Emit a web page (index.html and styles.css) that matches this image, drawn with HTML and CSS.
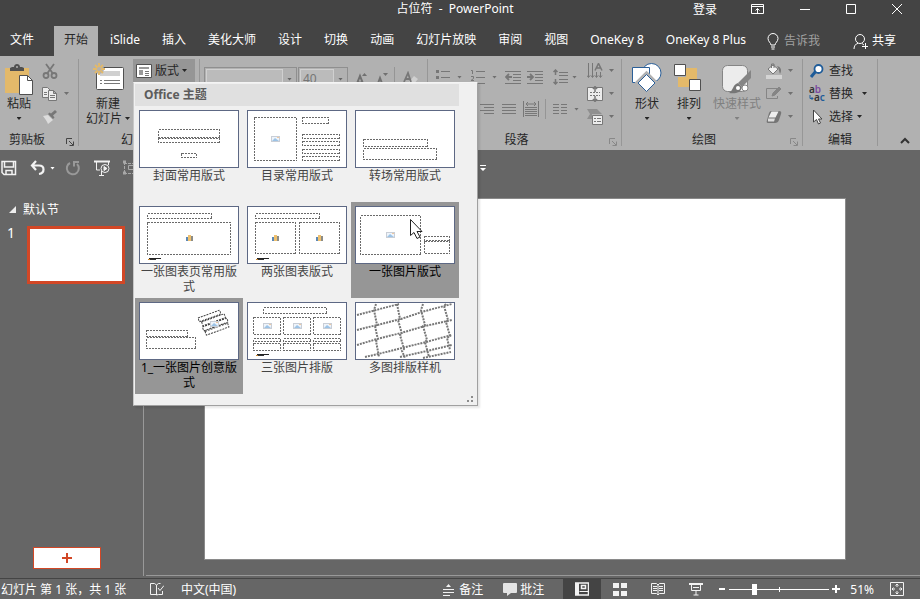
FILE: index.html
```
<!DOCTYPE html>
<html lang="zh-CN">
<head>
    <meta charset="UTF-8">
    <meta name="viewport" content="width=device-width, initial-scale=1.0">
    <title>占位符 - PowerPoint</title>
    <link rel="stylesheet" href="styles.css">
</head>
<body>
    <!-- shared symbols for the layout thumbnails -->
    <svg class="defs" aria-hidden="true">
        <symbol id="pic" viewBox="0 0 9 6"><rect width="9" height="6" fill="#c9ced6"/><rect x="1" y="1" width="7" height="4" fill="#eef4fb"/><path d="M1 5l3-3 4 3z" fill="#9cc3e6"/><rect x="6" y="1" width="2" height="1" fill="#f0c9a0"/></symbol>
        <symbol id="chart" viewBox="0 0 7 6"><rect y="2" width="2" height="4" fill="#5b87b5"/><rect x="2" width="3" height="6" fill="#efc06d"/><rect x="5" y="1" width="2" height="5" fill="#8c8c86"/></symbol>
        <symbol id="mark" viewBox="0 0 13 2"><path d="M1 0h12v1h-12z" fill="#222"/><path d="M0 1h8v1h-8z" fill="#333"/><path d="M0 1h2v1h-2z" fill="#d08a2e"/></symbol>
    </svg>

    <header>
        <div class="titlebar">
            <h1>占位符&nbsp; -&nbsp; PowerPoint</h1>
            <div class="window-controls">
                <button class="login">登录</button>
                <button aria-label="功能区显示选项"><svg width="14" height="12" viewBox="0 0 14 12" fill="none" stroke="#fff"><path d="M.5 1.500h12v9h-12zM.5 3.500h12M6.500 10V5.500M4.500 7.500l2-2 2 2"/></svg></button>
                <button aria-label="最小化"><svg width="12" height="12" viewBox="0 0 12 12" stroke="#fff"><path d="M1 6.500h10"/></svg></button>
                <button aria-label="最大化"><svg width="12" height="12" viewBox="0 0 12 12" fill="none" stroke="#fff"><path d="M1.500 1.500h9v9h-9z"/></svg></button>
                <button aria-label="关闭"><svg width="12" height="12" viewBox="0 0 12 12" stroke="#fff"><path d="M1 1l10 10M11 1L1 11"/></svg></button>
            </div>
        </div>
        <nav class="tabs">
            <a class="file" href="#">文件</a>
            <a class="active" href="#">开始</a>
            <a href="#">iSlide</a>
            <a href="#">插入</a>
            <a href="#">美化大师</a>
            <a href="#">设计</a>
            <a href="#">切换</a>
            <a href="#">动画</a>
            <a href="#">幻灯片放映</a>
            <a href="#">审阅</a>
            <a href="#">视图</a>
            <a href="#">OneKey 8</a>
            <a href="#">OneKey 8 Plus</a>
            <a class="tell" href="#"><svg width="12" height="17" viewBox="0 0 12 17" fill="none" stroke="#fff"><path d="M4 12c0-2-3-3.500-3-6.500a5 5 0 0 1 10 0c0 3-3 4.500-3 6.500zM4 14h4M4.500 16h3"/></svg>告诉我</a>
            <a class="share" href="#"><svg width="16" height="17" viewBox="0 0 16 17" fill="none" stroke="#fff"><circle cx="7" cy="6" r="4.500"/><path d="M1 16c0-3 1.500-5 4-5.800M9 10.500l2 1.500M12.500 10v6M9 13.500h6"/></svg>共享</a>
        </nav>
    </header>

    <section class="ribbon">
        <div class="group clipboard">
            <div class="tools">
                <button class="big">
                    <svg width="32" height="32" viewBox="0 0 32 32"><path d="M2 5h24v25H2z" fill="#e3b96a"/><path d="M7 8V5l2-1h2c0-4 6-4 6 0h2l2 1v3z" fill="#505050"/><circle cx="14" cy="4" r="1" fill="#b1b1b1"/><path d="M16.500 12.500h8l5 5v14h-13z" fill="#fff" stroke="#505050"/><path d="M24.500 12.500v5h5" fill="none" stroke="#505050"/></svg>
                    <span>粘贴</span><i class="caret"></i>
                </button>
                <div class="stack">
                    <button class="small" aria-label="剪切"><svg width="16" height="16" viewBox="0 0 16 16" fill="none" stroke="#777" stroke-width="1.800"><path d="M4 1l6.500 9M12 1L5.500 10"/><circle cx="4" cy="12.500" r="2.500"/><circle cx="12" cy="12.500" r="2.500"/></svg></button>
                    <button class="small" aria-label="复制"><svg width="16" height="16" viewBox="0 0 16 16" fill="#ececec" stroke="#777"><path d="M.5 1.500h5l3 3v7h-8z"/><path d="M6.500 4.500h5l3 3v7h-8zM8 9.500h5M8 11.500h5M2 6.500h3M2 8.500h3M11.500 4.500v3h3"/></svg><i class="caret"></i></button>
                    <button class="small" aria-label="格式刷"><svg width="16" height="16" viewBox="0 0 16 16"><path d="M1 7l5-1 5 5-5 4c-1-3-3-5-5-8z" fill="#dcdcdc"/><path d="M6 5l5 5 1.500-1.500-1.500-2L15 3l-2-2-4 3.500L7.500 3.500z" fill="#777"/></svg></button>
                </div>
            </div>
            <div class="caption"><span>剪贴板</span><button class="launcher" aria-label="剪贴板选项"><svg width="8" height="8" viewBox="0 0 8 8" fill="none" stroke="#444"><path d="M.5 6V.5H6M3 3l4 4M7.500 3.500v4h-4"/></svg></button></div>
        </div>

        <div class="group slides">
            <div class="tools">
                <button class="big">
                    <svg width="32" height="32" viewBox="0 0 32 32"><rect x="4.500" y="4.500" width="27" height="22" rx="1" fill="#fff" stroke="#505050"/><path d="M8 8h20v5H8z" fill="#d0d0d0"/><path d="M8 17.500h2M12 17.500h16M8 20.500h2M12 20.500h16" stroke="#777"/><circle cx="7" cy="6" r="5" fill="#b1b1b1"/><path d="M7 0v12M1 6h12M3 2l8 8M11 2l-8 8" stroke="#e3b96a" stroke-width="1.800"/><circle cx="7" cy="6" r="2.500" fill="#b1b1b1" stroke="#e3b96a"/></svg>
                    <span>新建</span><span class="with-caret">幻灯片<i class="caret"></i></span>
                </button>
                <div class="layout-menu">
                    <button class="layout-btn"><svg width="16" height="14" viewBox="0 0 16 14"><path d="M.5.5h15v13H.5z" fill="#fff" stroke="#505050"/><path d="M3 3h10v2H3zM3 6h4v5H3z" fill="#999"/><path d="M9 7.500h4M9 9.500h4M9 11.500h4" stroke="#777"/></svg>版式<i class="caret"></i></button>
                    <div class="gallery">
                        <h2>Office 主题</h2>
                        <div class="gallery-grid">
                            <button class="layout">
                                <svg class="thumb" viewBox="0 0 98 56"><path d="M18.500 18.500h61v8h-61zM18.500 27.500h61v4h-61zM41.500 42.500h15v4h-15z"/></svg>
                                <span>封面常用版式</span>
                            </button>
                            <button class="layout">
                                <svg class="thumb" viewBox="0 0 98 56"><path d="M6.500 6.500h42v43h-42zM54.500 6.500h26v6h-26zM54.500 23.500h37v4h-37zM54.500 30.500h37v4h-37zM54.500 38.500h37v4h-37zM54.500 45.500h37v4h-37z"/><use href="#pic" x="23" y="25" width="9" height="6"/></svg>
                                <span>目录常用版式</span>
                            </button>
                            <button class="layout">
                                <svg class="thumb" viewBox="0 0 98 56"><path d="M7.500 28.500h64v7h-64zM7.500 37.500h73v11h-73z"/></svg>
                                <span>转场常用版式</span>
                            </button>
                            <button class="layout">
                                <svg class="thumb" viewBox="0 0 98 56"><path d="M7.500 6.500h64v5h-64zM7.500 15.500h83v32h-83z"/><use href="#chart" x="46" y="28" width="7" height="6"/><use href="#mark" x="8" y="51" width="13" height="2"/></svg>
                                <span>一张图表页常用版式</span>
                            </button>
                            <button class="layout">
                                <svg class="thumb" viewBox="0 0 98 56"><path d="M7.500 6.500h64v5h-64zM7.500 15.500h40v31h-40zM51.500 15.500h40v31h-40z"/><use href="#chart" x="24" y="28" width="7" height="6"/><use href="#chart" x="68" y="28" width="7" height="6"/><use href="#mark" x="8" y="51" width="13" height="2"/></svg>
                                <span>两张图表版式</span>
                            </button>
                            <button class="layout selected">
                                <svg class="thumb" viewBox="0 0 98 56"><path d="M4.500 8.500h60v39h-60zM68.500 29.500h25v4h-25zM68.500 34.500h25v12h-25z"/><use href="#pic" x="30" y="25" width="9" height="6"/><path class="pointer" d="M54.500 12.500v16l3.500-3 3 6 3-1.500-3-5.500h5z"/></svg>
                                <span>一张图片版式</span>
                            </button>
                            <button class="layout selected">
                                <svg class="thumb" viewBox="0 0 98 56"><path d="M6.500 27.500h41v6h-41zM6.500 34.500h49v11h-49z"/><g class="tilted" transform="rotate(-20 58 15)"><path d="M58 15h23v4h-23zM60 20h24v4h-24zM59 25h26v4h-26zM60 30h24v4h-24z"/></g><use href="#pic" x="70" y="18" width="9" height="6"/></svg>
                                <span>1_一张图片创意版式</span>
                            </button>
                            <button class="layout">
                                <svg class="thumb" viewBox="0 0 98 56"><path d="M15.500 4.500h63v6h-63zM5.500 14.500h27v17h-27zM35.500 14.500h27v17h-27zM65.500 14.500h27v17h-27zM5.500 35.500h27v3h-27zM35.500 35.500h27v3h-27zM65.500 35.500h27v3h-27zM5.500 40.500h27v7h-27zM35.500 40.500h27v7h-27zM65.500 40.500h27v7h-27z"/><use href="#pic" x="15" y="20" width="9" height="6"/><use href="#pic" x="45" y="20" width="9" height="6"/><use href="#pic" x="75" y="20" width="9" height="6"/><use href="#mark" x="8" y="51" width="13" height="2"/></svg>
                                <span>三张图片排版</span>
                            </button>
                            <button class="layout">
                                <svg class="thumb" viewBox="0 0 98 56"><g class="tilted mesh"><path d="M1 12l19-5 23-6M1 27l20-5 24-6 24-8 27-7M1 42l20-6 24-6 24-7 27-6M9 54l13-3 24-6 24-6 26-7M44 54l27-6 25-6M67 55l28-6M20 1l-2 6 3 15-2 1 3 14-2 1 3 16M41 1l3 15-2 1 4 14-2 1 4 14-2 2 3 7M67 1l-2 6 4 15-2 1 4 14-2 2 4 15M90 1l-2 2 4 14-2 2 4 14-3 2 3 12"/></g></svg>
                                <span>多图排版样机</span>
                            </button>
                        </div>
                        <svg class="grip" width="6" height="6" viewBox="0 0 6 6" fill="#8c8c8c"><path d="M4 0h2v2H4zM0 4h2v2H0zM4 4h2v2H4z"/></svg>
                    </div>
                </div>
            </div>
            <div class="caption"><span>幻灯片</span></div>
        </div>

        <div class="group font">
            <div class="tools">
                <label class="combo name"><select aria-label="字体"><option></option></select><i class="caret"></i></label>
                <label class="combo size"><select aria-label="字号"><option>40</option></select><i class="caret"></i></label>
                <button class="small grow" aria-label="增大字号"><svg width="16" height="16" viewBox="0 0 16 16"><path d="M2 15L6 5l4 10M3.500 11.500h5" fill="none" stroke="#707070" stroke-width="2"/><path d="M8 5l2.500-3L13 5z" fill="#707070"/></svg></button>
                <button class="small" aria-label="减小字号"><svg width="16" height="16" viewBox="0 0 16 16"><path d="M2 15l3-8 3 8M3.500 12h4" fill="none" stroke="#707070" stroke-width="2"/><path d="M8 2h5l-2.500 3z" fill="#707070"/></svg></button>
                <span class="divider"></span>
                <button class="small clear" aria-label="清除格式"><svg width="16" height="16" viewBox="0 0 16 16"><path d="M6 11l5-6 4 3-5 6z" fill="#d0d0d0"/><path d="M1 11L5 2l3 9M2.500 8h4" fill="none" stroke="#777" stroke-width="1.800"/></svg></button>
            </div>
            <div class="caption"><span>字体</span></div>
        </div>

        <div class="group paragraph">
            <div class="tools">
                <div class="para-rows">
                    <div class="row">
                        <button class="small" aria-label="项目符号"><svg width="16" height="16" viewBox="0 0 16 16" stroke="#777"><path d="M1 2.500h3M1 8.500h3M1 14.500h3" stroke-width="3"/><path d="M6 2.500h9M6 8.500h9M6 14.500h9"/></svg><i class="caret"></i></button>
                        <button class="small" aria-label="编号"><svg width="16" height="16" viewBox="0 0 16 16" fill="none" stroke="#777"><path d="M1 1.500h1.500V5M1 7.500h2.500v2L1 11.500h3M6 2.500h9M6 8.500h9M6 14.500h9"/></svg><i class="caret"></i></button>
                        <button class="small" aria-label="减少缩进"><svg width="16" height="16" viewBox="0 0 16 16" fill="none" stroke="#777"><path d="M0 2.500h16M8 5.500h8M8 8.500h8M8 11.500h8M0 14.500h16"/><path d="M7 8H1M4 5L1 8l3 3" stroke-width="1.800"/></svg></button>
                        <button class="small" aria-label="增加缩进"><svg width="16" height="16" viewBox="0 0 16 16" fill="none" stroke="#777"><path d="M0 2.500h16M8 5.500h8M8 8.500h8M8 11.500h8M0 14.500h16"/><path d="M0 8h6M3 5l3 3-3 3" stroke-width="1.800"/></svg></button>
                        <button class="small spacing" aria-label="行距"><svg width="16" height="16" viewBox="0 0 16 16" fill="none" stroke="#777"><path d="M6 3.500h9M6 6.500h9M6 10.500h9M6 13.500h9"/><path d="M2.500 1v5M.5 3l2-2 2 2M2.500 10v5M.5 13l2 2 2-2" stroke-width="1.500"/></svg><i class="caret"></i></button>
                    </div>
                    <div class="row">
                        <button class="small" aria-label="左对齐"><svg width="16" height="16" viewBox="0 0 16 16" stroke="#777"><path d="M1 3.500h14M1 6.500h9M1 9.500h14M1 12.500h9"/></svg></button>
                        <button class="small" aria-label="居中"><svg width="16" height="16" viewBox="0 0 16 16" stroke="#777"><path d="M1 3.500h14M4 6.500h8M1 9.500h14M4 12.500h8"/></svg></button>
                        <button class="small" aria-label="右对齐"><svg width="16" height="16" viewBox="0 0 16 16" stroke="#777"><path d="M1 3.500h14M5 6.500h10M1 9.500h14M5 12.500h10"/></svg></button>
                        <button class="small" aria-label="两端对齐"><svg width="16" height="16" viewBox="0 0 16 16" stroke="#777"><path d="M1 3.500h14M1 6.500h14M1 9.500h14M1 12.500h14"/></svg></button>
                        <button class="small" aria-label="分散对齐"><svg width="16" height="16" viewBox="0 0 16 16" fill="none" stroke="#777"><path d="M.5 0v16M15.500 0v16M2 6.500h12M2 8.500h12M2 10.500h12M2 12.500h12M2 14.500h12"/><path d="M3 3h10M5 1L3 3l2 2M11 1l2 2-2 2"/></svg></button>
                        <span class="divider"></span>
                        <button class="small columns" aria-label="分栏"><svg width="16" height="16" viewBox="0 0 16 16" stroke="#777"><path d="M1 3.500h6M9 3.500h6M1 6.500h6M9 6.500h6M1 9.500h6M9 9.500h6M1 12.500h6M9 12.500h6"/></svg><i class="caret"></i></button>
                    </div>
                </div>
                <div class="stack">
                    <button class="small" aria-label="文字方向"><svg width="16" height="16" viewBox="0 0 16 16" fill="none" stroke="#777"><path d="M1.500 0v14M5.500 0v14M9.500 9v5M13.500 9v5M0 12.500l1.500 2 1.500-2M4 12.500l1.500 2 1.500-2M8 12.500l1.500 2 1.500-2M12 12.500l1.500 2 1.500-2"/><path d="M8 7.500l3.500-7 3.500 7M9.500 5h4" stroke-width="1.500"/></svg><i class="caret"></i></button>
                    <button class="small" aria-label="对齐文本"><svg width="16" height="16" viewBox="0 0 16 16" fill="#ececec" stroke="#777"><path d="M.5 1.500h15v13H.5z"/><path d="M3 6.500h10M3 9.500h10" stroke-dasharray="2 1"/><path d="M8 0v6M6 3l2-2.500L10 3M8 10v6M6 13l2 2.500 2-2.500" fill="none" stroke-width="1.500"/></svg><i class="caret"></i></button>
                    <button class="small" aria-label="转换为 SmartArt"><svg width="16" height="16" viewBox="0 0 16 16"><path d="M0 0h10l5 5H5v5H0l3-5z" fill="#8f8f8f"/><path d="M5.500 6.500h10v9h-10z" fill="#ececec" stroke="#777"/><path d="M7 9.500h2M10 9.500h4M7 12.500h2M10 12.500h4" stroke="#777"/></svg><i class="caret"></i></button>
                </div>
            </div>
            <div class="caption"><span>段落</span><button class="launcher" aria-label="段落选项"><svg width="8" height="8" viewBox="0 0 8 8" fill="none" stroke="#888"><path d="M.5 6V.5H6M3 3l4 4M7.500 3.500v4h-4"/></svg></button></div>
        </div>

        <div class="group drawing">
            <div class="tools">
                <button class="big shapes">
                    <svg width="32" height="32" viewBox="0 0 32 32" fill="#fff" stroke="#2b5f98"><circle cx="20.500" cy="10" r="9.500"/><path d="M1.500 4.500h17v15h-17z"/><path d="M15.500 10.500l9 9-9 9-9-9z" stroke="#b1b1b1" stroke-width="4"/><path d="M15.500 11.500l8.500 8.500-8.500 8.500L7 20z"/></svg>
                    <span>形状</span><i class="caret"></i>
                </button>
                <button class="big arrange">
                    <svg width="32" height="32" viewBox="0 0 32 32"><path d="M13 5h11v19H5V14h8z" fill="#e3b96a"/><path d="M1.500 1.500h11v11h-11zM16.500 16.500h11v11h-11z" fill="#fff" stroke="#505050"/></svg>
                    <span>排列</span><i class="caret"></i>
                </button>
                <button class="big styles muted">
                    <svg width="32" height="32" viewBox="0 0 32 32"><rect x="1.500" y="2.500" width="25" height="26" rx="5" fill="#ececec" stroke="#858585"/><path d="M30 7v8l-9 9-4-4z" fill="#858585"/><path d="M17 20l4 4c-1 6-7 7-13 6 4-2 4-9 9-10z" fill="#777"/><circle cx="24" cy="25" r="3" fill="#fff" stroke="#858585"/><circle cx="17" cy="25" r="2" fill="#fff"/></svg>
                    <span>快速样式</span><i class="caret"></i>
                </button>
                <div class="stack">
                    <button class="small" aria-label="形状填充"><svg width="16" height="16" viewBox="0 0 16 16"><path d="M2 6l5-4 5 4-5 5z" fill="#f2f2f2" stroke="#777"/><path d="M5.500 5V1h2.500v4" fill="none" stroke="#777"/><path d="M11 3c4 1 5 4 3 8-1-3-1-5-3-8z" fill="#777"/><path d="M0 12h16v4H0z" fill="#d4d4d4"/></svg><i class="caret"></i></button>
                    <button class="small" aria-label="形状轮廓"><svg width="16" height="16" viewBox="0 0 16 16" fill="none" stroke="#858585"><path d="M11 2.500H.5v10h11V10"/><path d="M6 10l1-3 6-6 2 2-6 6z" fill="#858585"/></svg><i class="caret"></i></button>
                    <button class="small" aria-label="形状效果"><svg width="16" height="16" viewBox="0 0 16 16"><path d="M5 2h8q3 0 2 3l-2 6q-1 3-4 3H2q-2 0-1-3l2-7q1-2 2-2z" fill="#757575"/><path d="M5.500 2.500h7l-3 6h-7z" fill="#eee"/><path d="M2 9.500h7l-1 3H2z" fill="#ddd"/></svg><i class="caret"></i></button>
                </div>
            </div>
            <div class="caption"><span>绘图</span><button class="launcher" aria-label="绘图选项"><svg width="8" height="8" viewBox="0 0 8 8" fill="none" stroke="#888"><path d="M.5 6V.5H6M3 3l4 4M7.500 3.500v4h-4"/></svg></button></div>
        </div>

        <div class="group editing">
            <div class="tools">
                <div class="stack">
                    <button class="small"><svg width="16" height="16" viewBox="0 0 16 16"><path d="M2 14l5-6" stroke="#1f5c99" stroke-width="3"/><circle cx="9.500" cy="6" r="4" fill="#fff" stroke="#1f5c99" stroke-width="1.800"/></svg>查找</button>
                    <button class="small replace"><svg class="abc" width="16" height="16" viewBox="0 0 16 16"><text x="0" y="7">a<tspan fill="#7b4ba0">b</tspan></text><text x="5" y="15">a<tspan fill="#1f5c99">c</tspan></text><path d="M1 9v3.500h3M2.500 11L4 12.500 2.500 14" fill="none" stroke="#1f5c99"/></svg>替换<i class="caret"></i></button>
                    <button class="small"><svg width="16" height="16" viewBox="0 0 16 16"><path d="M4.500 1v12l3-2.500 2 4.500 2-1-2-4h3.500z" fill="#fff" stroke="#444"/></svg>选择<i class="caret"></i></button>
                </div>
            </div>
            <div class="caption"><span>编辑</span></div>
        </div>
        <button class="collapse" aria-label="折叠功能区"><svg width="10" height="8" viewBox="0 0 10 8" fill="none" stroke="#333" stroke-width="2"><path d="M1 6l4-4 4 4"/></svg></button>
    </section>

    <div class="quick-access">
        <button aria-label="保存"><svg width="16" height="16" viewBox="0 0 16 16" fill="none" stroke="#f2f2f2"><path d="M1 1.500h13.500v13H3l-2-2zM3.500 2v5h9V2M5 14.500v-4h6v4" stroke-width="1.500"/></svg></button>
        <button class="undo" aria-label="撤消"><svg width="16" height="16" viewBox="0 0 16 16" fill="none" stroke="#f2f2f2" stroke-width="2.200"><path d="M6 1L2 5.500 6 10M2 5.500h7c6 0 6 7.500 0 8.500"/></svg><i class="caret"></i></button>
        <button aria-label="恢复"><svg width="16" height="16" viewBox="0 0 16 16" fill="none" stroke="#999" stroke-width="2"><path d="M5 3a6 6 0 1 0 7 1M9 6.500V2h5"/></svg></button>
        <button class="play" aria-label="从头开始放映"><svg width="16" height="16" viewBox="0 0 16 16" fill="none" stroke="#f2f2f2"><path d="M0 1.500h16" stroke-width="2"/><path d="M2.500 2v8H6M7.500 11v4M5 15.500h5M14.500 2v3"/><circle cx="11" cy="8.500" r="4"/><path d="M10 6.500l3 2-3 2z" fill="#f2f2f2"/></svg></button>
        <button class="group-shapes" aria-label="组合"><svg width="16" height="16" viewBox="0 0 16 16" fill="none" stroke="#a8a8a8"><path d="M2 3.500h12M2.500 2v12M2 13.500h12M13.500 2v12" stroke-dasharray="3 1"/><path d="M6.500 5.500h6v4h-6z"/><path d="M1 2h3M1 13h3" stroke-width="3"/></svg></button>
        <button class="more" aria-label="自定义快速访问工具栏"><svg width="6" height="8" viewBox="0 0 6 8"><path d="M0 1h6v1H0zM0 4h6L3 7z" fill="#fff"/></svg></button>
    </div>

    <main>
        <aside>
            <div class="section-name"><svg width="7" height="7" viewBox="0 0 7 7"><path d="M7 0v7H0z" fill="#eee"/></svg>默认节</div>
            <div class="slide-item"><span>1</span><a class="slide-thumb" href="#" aria-label="幻灯片 1"></a></div>
            <button class="add-slide" aria-label="新建幻灯片"><svg width="10" height="10" viewBox="0 0 10 10" stroke="#d24726" stroke-width="2"><path d="M5 0v10M0 5h10"/></svg></button>
        </aside>
        <div class="canvas"><div class="slide"></div></div>
    </main>

    <footer>
        <span class="position">幻灯片 第 1 张，共 1 张</span>
        <button class="proof" aria-label="拼写检查"><svg width="14" height="14" viewBox="0 0 14 14" fill="none" stroke="#f2f2f2"><path d="M6.500 12.500H.5v-11h4l2 1.500v10l2-.5h4V9M6.500 3l2-1.500h2M8 6l2 2.500 4-5"/></svg></button>
        <span>中文(中国)</span>
        <div class="views">
            <button class="notes"><svg width="12" height="14" viewBox="0 0 12 14" stroke="#f2f2f2"><path d="M0 7.500h11M0 10.500h11M0 13.500h7"/><path d="M3 5h5L5.500 2z" fill="#f2f2f2" stroke="none"/></svg>备注</button>
            <button class="comments"><svg width="14" height="14" viewBox="0 0 14 14" fill="#e4e4e4"><path d="M1 1h12q1 0 1 1v8q0 1-1 1H8l-4 3v-3H1q-1 0-1-1V2q0-1 1-1z"/></svg>批注</button>
            <button class="view active" aria-label="普通视图"><svg width="14" height="14" viewBox="0 0 14 14" fill="none" stroke="#f2f2f2"><path d="M.5 1h13v12H.5z" stroke-width="1.500"/><path d="M2.500 1v12" stroke-width="3"/><path d="M4.500 9.500H14"/><path d="M6.500 3.500h4v3h-4z" stroke-width="1.500"/></svg></button>
            <button class="view" aria-label="幻灯片浏览"><svg width="14" height="13" viewBox="0 0 14 13" fill="#f2f2f2"><path d="M0 0h6v5H0zM8 0h6v5H8zM0 8h6v5H0zM8 8h6v5H8z"/></svg></button>
            <button class="view" aria-label="阅读视图"><svg width="14" height="14" viewBox="0 0 14 14" fill="none" stroke="#f2f2f2"><path d="M7 3v10M.5 1.500h5L7 3l1.500-1.500h5v10h-5L7 13l-1.500-1.500h-5zM2 4.500h4M2 6.500h4M2 8.500h4M8 4.500h4M8 6.500h4M8 8.500h4"/></svg></button>
            <button class="view" aria-label="幻灯片放映"><svg width="14" height="14" viewBox="0 0 14 14" fill="none" stroke="#f2f2f2"><path d="M0 2h14" stroke-width="2"/><path d="M2.500 2v6.500h9V2M4 5.500h6M7 9v4M4.500 13h5"/></svg></button>
            <button class="zoom-btn" aria-label="缩小"><svg width="8" height="8" viewBox="0 0 8 8"><path d="M1 3h6v2H1z" fill="#fff"/></svg></button>
            <input type="range" min="0" max="100" value="24" aria-label="缩放">
            <button class="zoom-btn" aria-label="放大"><svg width="8" height="8" viewBox="0 0 8 8"><path d="M3 0h2v3h3v2H5v3H3V5H0V3h3z" fill="#fff"/></svg></button>
            <button class="percent">51%</button>
            <button class="fit" aria-label="适应窗口"><svg width="14" height="14" viewBox="0 0 14 14" fill="none" stroke="#f2f2f2"><path d="M.5.5h13v13H.5zM7 2v3M7 9v3M2 7h3M9 7h3M5.500 3.500L7 2l1.500 1.500M5.500 10.500L7 12l1.500-1.500M3.500 5.500L2 7l1.500 1.500M10.500 5.500L12 7l-1.500 1.500"/></svg></button>
        </div>
    </footer>
</body>
</html>
```
FILE: styles.css
```
* {
    box-sizing: border-box;
}
body {
    display: flex;
    flex-direction: column;
    min-height: 100vh;
    margin: 0;
    background: #666;
    color: #fff;
    font-family: "Noto Sans", "Noto Sans CJK SC", sans-serif;
    font-size: 12px;
    line-height: 15px;
}
button {
    display: flex;
    align-items: center;
    padding: 0;
    border: 0;
    background: none;
    color: inherit;
    font: inherit;
}
a {
    color: inherit;
    text-decoration: none;
}
svg {
    flex: none;
    display: block;
}
.defs {
    position: absolute;
    width: 0;
    height: 0;
}
.caret {
    flex: none;
    width: 5px;
    height: 3px;
    background: currentColor;
    clip-path: polygon(0 0, 100% 0, 50% 100%);
}
.divider {
    width: 1px;
    height: 20px;
    background: #959595;
}

/* title bar and tabs */
header {
    background: #444;
}
.titlebar {
    display: grid;
    grid-template-columns: 1fr auto 1fr;
    height: 26px;
    padding: 0 13px 8px 3px;
}
h1 {
    grid-column: 2;
    margin: 0;
    font-size: 12px;
    font-weight: normal;
    line-height: 18px;
}
.window-controls {
    display: flex;
    justify-content: flex-end;
    align-items: center;
    gap: 34px;
    padding-right: 4px;
}
.tabs {
    display: flex;
    height: 30px;
    line-height: 28px;
}
.tabs a {
    padding: 0 11px;
    white-space: nowrap;
}
.tabs .file {
    padding: 0 20px 0 10px;
}
.tabs .active {
    padding: 0 10px;
    margin-right: 1px;
    background: #b1b1b1;
    color: #262626;
}
.tabs .tell,
.tabs .share {
    display: flex;
    align-items: center;
    gap: 5px;
    padding: 0 10px;
    color: #a0a0a0;
}
.tabs .share {
    gap: 3px;
    margin-left: auto;
    padding: 0 24px 0 0;
    color: #fff;
}

/* ribbon */
.ribbon {
    display: flex;
    padding: 3px 0 4px;
    background: #b1b1b1;
    color: #262626;
}
.group {
    display: flex;
    flex-direction: column;
    flex: none;
    border-right: 1px solid #979797;
}
.tools {
    display: flex;
    height: 69px;
}
.caption {
    display: flex;
    height: 18px;
    line-height: 24px;
    text-align: center;
}
.caption span {
    flex: 1;
}
.launcher {
    width: 16px;
    padding: 9px 0 0 4px;
}
.big {
    flex-direction: column;
    padding-top: 4px;
}
.big span {
    margin-top: 1px;
    white-space: nowrap;
}
.big > .caret {
    margin-top: 6px;
}
.with-caret {
    display: flex;
    align-items: center;
    gap: 3px;
}
.big .with-caret {
    margin-top: 0;
}
.muted {
    color: #808080;
}
.stack {
    display: flex;
    flex-direction: column;
}
.small {
    height: 23px;
    gap: 6px;
    color: #707070;
}
.clipboard {
    width: 79px;
}
.clipboard .big {
    width: 38px;
}
.clipboard .stack {
    margin-left: 4px;
}
.clipboard .caption span {
    padding-right: 8px;
}
.slides {
    width: 121px;
}
.slides .big {
    width: 54px;
    padding-left: 4px;
}
.layout-menu {
    position: relative;
}
.layout-btn {
    width: 62px;
    height: 23px;
    padding-left: 3px;
    gap: 3px;
    background: #969696;
}
.font {
    width: 228px;
}
.font .tools {
    align-items: flex-start;
    gap: 3px;
    padding: 8px 0 0 4px;
}
.combo {
    display: flex;
    align-items: center;
    width: 93px;
    height: 24px;
    padding-right: 4px;
    border: 1px solid #8f8f8f;
    color: #666;
}
.combo select {
    flex: 1;
    min-width: 0;
    height: 20px;
    margin: 0 4px 0 1px;
    padding: 0 2px;
    appearance: none;
    border: 1px solid #d0d0d0;
    background: #bbb;
    color: #757575;
    font: inherit;
    line-height: 18px;
}
.size {
    width: 50px;
    margin-left: -2px;
}
.grow {
    margin: 0 2px 0 3px;
}
.clear {
    margin-left: 5px;
}
.paragraph {
    width: 194px;
}
.paragraph .tools {
    padding-left: 7px;
}
.para-rows {
    width: 152px;
    padding-top: 2px;
}
.row {
    display: flex;
    align-items: center;
    gap: 6px;
    height: 32px;
}
.row:first-child .small:nth-child(-n+2) {
    padding-right: 2px;
}
.paragraph .spacing {
    margin-left: 4px;
    gap: 3px;
}
.drawing {
    width: 181px;
}
.drawing .tools {
    padding-left: 4px;
}
.shapes {
    width: 42px;
}
.arrange {
    width: 42px;
}
.styles {
    width: 54px;
}
.drawing .stack {
    margin-left: 2px;
}
.editing {
    width: 75px;
}
.editing .small {
    gap: 4px;
    padding-left: 6px;
    color: #262626;
}
.editing .replace .caret {
    margin-left: 5px;
}
.abc {
    overflow: visible;
    fill: #333;
    font-size: 10px;
    font-weight: 600;
}
.collapse {
    align-self: flex-end;
    margin: 0 10px 1px auto;
}

/* layout gallery */
.gallery {
    position: absolute;
    z-index: 10;
    top: 23px;
    left: 0;
    width: 345px;
    padding: 1px 18px 11px 1px;
    border: 1px solid #a0a0a0;
    border-top-color: #f4f4f4;
    border-left-color: #c8c8c8;
    background: #f0f0f0;
    box-shadow: 2px 2px 2px rgba(0, 0, 0, 0.1);
    color: #444;
}
.gallery h2 {
    margin: 0;
    padding-left: 9px;
    background: #e0e0e0;
    color: #5c5c5c;
    font-size: 12px;
    font-weight: bold;
    line-height: 22px;
}
.gallery-grid {
    display: grid;
    grid-template-columns: repeat(3, 108px);
}
.layout {
    flex-direction: column;
    height: 96px;
    padding: 4px;
    text-align: center;
}
.layout.selected {
    background: #969696;
    color: #000;
}
.thumb {
    width: 100px;
    height: 58px;
    border: 1px solid #5d6884;
    background: #fff;
}
.thumb path {
    shape-rendering: crispEdges;
}
.thumb > path,
.tilted path {
    fill: none;
    stroke: #6a6a6a;
    stroke-dasharray: 2 1;
}
.tilted path {
    stroke: #444;
    shape-rendering: auto;
}
.mesh path {
    stroke-width: 2px;
    stroke: #777;
}
.thumb .pointer {
    fill: #fff;
    stroke: #222;
    stroke-dasharray: none;
    shape-rendering: auto;
}
.grip {
    position: absolute;
    right: 4px;
    bottom: 3px;
}

/* quick access toolbar */
.quick-access {
    display: flex;
    align-items: center;
    height: 36px;
    padding: 0 434px 0 1px;
}
.undo {
    gap: 4px;
    margin: 0 10px 0 13px;
}
.play {
    margin-left: 13px;
}
.group-shapes {
    margin-left: 12px;
}
.more {
    margin-left: auto;
}

/* slide list and canvas */
main {
    display: flex;
    flex: 1;
    padding: 4px 0 2px;
}
aside {
    display: flex;
    flex-direction: column;
    width: 144px;
    padding: 12px 0 7px;
    border-right: 1px solid #999;
}
.section-name {
    display: flex;
    align-items: center;
    gap: 7px;
    padding-left: 9px;
}
.slide-item {
    display: flex;
    gap: 12px;
    margin-top: 9px;
    padding-left: 7px;
    font-size: 14px;
    line-height: 13px;
}
.slide-thumb {
    width: 98px;
    height: 58px;
    border: 3px solid #d24726;
    background: #fff;
}
.add-slide {
    justify-content: center;
    width: 68px;
    height: 22px;
    margin: auto 0 0 33px;
    border: 1px solid #d24726;
    background: #fff;
}
.canvas {
    display: flex;
    flex: 1;
    margin-left: 2px;
    padding: 8px 74px 15px 58px;
    border-bottom: 1px solid #999;
}
.slide {
    flex: 1;
    border: 1px solid #8a8a8a;
    background: #fff;
}

/* status bar */
footer {
    display: flex;
    align-items: center;
    height: 21px;
    padding: 0 16px 0 1px;
    border-top: 1px solid #444;
    white-space: nowrap;
}
.position {
    min-width: 131px;
}
.proof {
    margin: 0 17px 0 18px;
}
.views {
    display: flex;
    align-items: center;
    height: 20px;
    margin-left: auto;
}
.notes {
    gap: 4px;
    margin-right: 20px;
}
.comments {
    gap: 3px;
    margin-right: 19px;
}
.view {
    justify-content: center;
    width: 38px;
    height: 20px;
}
.view.active {
    background: #444;
}
.zoom-btn {
    margin-left: 3px;
}
input[type="range"] {
    width: 100px;
    height: 16px;
    margin: 0 0 0 3px;
    appearance: none;
    background: linear-gradient(#fff, #fff) 50% 50% / 1px 5px no-repeat, linear-gradient(#fff, #fff) 0 50% / 100px 1px no-repeat;
}
input[type="range"]::-webkit-slider-thumb {
    appearance: none;
    width: 5px;
    height: 11px;
    background: #fff;
}
.percent {
    margin: 0 16px 0 10px;
}
```
